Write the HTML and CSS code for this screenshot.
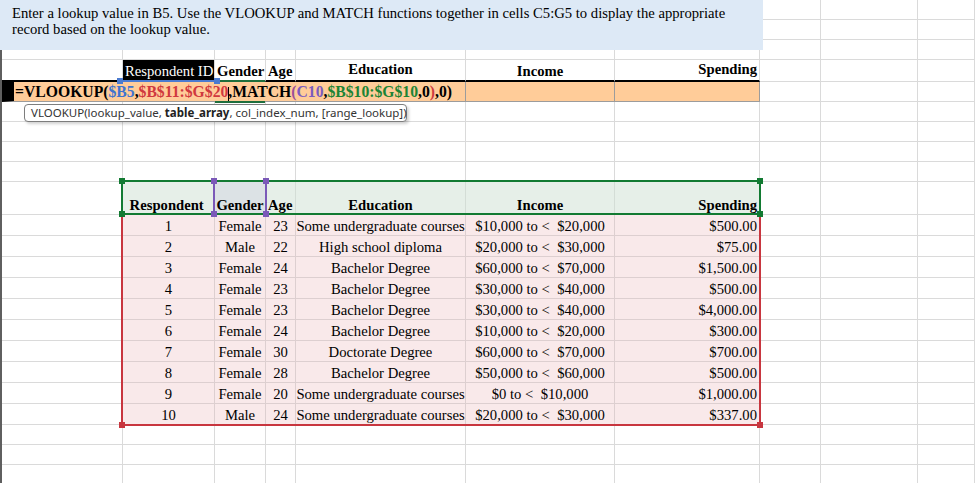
FILE: index.html
```html
<!DOCTYPE html>
<html>
<head>
<meta charset="utf-8">
<title>VLOOKUP and MATCH</title>
<link rel="stylesheet" href="styles.css">
</head>
<body>
<div class="sheet">
  <div class="edge"></div>
  <div class="grid">
    <div class="row"><div></div><div></div><div></div><div></div><div></div><div></div><div></div><div></div><div></div><div></div></div>
    <div class="row"><div></div><div></div><div></div><div></div><div></div><div></div><div></div><div></div><div></div><div></div></div>
    <div class="row"><div></div><div></div><div></div><div></div><div></div><div></div><div></div><div></div><div></div><div></div></div>
    <div class="row h22">
      <div class="thick"></div>
      <div class="thick blackcell">Respondent ID</div>
      <div class="thick b">Gender</div>
      <div class="thick b">Age</div>
      <div class="thick b c up">Education</div>
      <div class="thick b c">Income</div>
      <div class="thick b r up">Spending</div>
      <div></div><div></div><div></div>
    </div>
    <div class="row">
      <div class="formula b">=VLOOKUP(<span class="fb">$B5</span>,<span class="fr">$B$11:$G$20</span><span class="caret"></span>,MATCH<span class="fpp">(</span><span class="fp">C10</span>,<span class="fg">$B$10:$G$10</span>,0<span class="fpr">)</span>,0)</div>
      <div class="orange"></div>
      <div class="orange"></div>
      <div></div><div></div><div></div>
    </div>
    <div class="row"><div></div><div></div><div></div><div></div><div></div><div></div><div></div><div></div><div></div><div></div></div>
    <div class="row"><div></div><div></div><div></div><div></div><div></div><div></div><div></div><div></div><div></div><div></div></div>
    <div class="row"><div></div><div></div><div></div><div></div><div></div><div></div><div></div><div></div><div></div><div></div></div>
    <div class="row"><div></div><div></div><div></div><div></div><div></div><div></div><div></div><div></div><div></div><div></div></div>
    <div class="row h33">
      <div></div>
      <div class="tg b c">Respondent </div>
      <div class="tp b c">Gender</div>
      <div class="tg b">Age</div>
      <div class="tg b c">Education</div>
      <div class="tg b c">Income</div>
      <div class="tg b r">Spending</div>
      <div></div><div></div><div></div>
    </div>
    <div class="row h21"><div></div><div class="tr c">1</div><div class="tr c">Female</div><div class="tr c">23</div><div class="tr c">Some undergraduate courses</div><div class="tr c">$10,000 to &lt;  $20,000</div><div class="tr r">$500.00</div><div></div><div></div><div></div></div>
    <div class="row h21"><div></div><div class="tr c">2</div><div class="tr c">Male</div><div class="tr c">22</div><div class="tr c">High school diploma</div><div class="tr c">$20,000 to &lt;  $30,000</div><div class="tr r">$75.00</div><div></div><div></div><div></div></div>
    <div class="row h21"><div></div><div class="tr c">3</div><div class="tr c">Female</div><div class="tr c">24</div><div class="tr c">Bachelor Degree</div><div class="tr c">$60,000 to &lt;  $70,000</div><div class="tr r">$1,500.00</div><div></div><div></div><div></div></div>
    <div class="row h21"><div></div><div class="tr c">4</div><div class="tr c">Female</div><div class="tr c">23</div><div class="tr c">Bachelor Degree</div><div class="tr c">$30,000 to &lt;  $40,000</div><div class="tr r">$500.00</div><div></div><div></div><div></div></div>
    <div class="row h21"><div></div><div class="tr c">5</div><div class="tr c">Female</div><div class="tr c">23</div><div class="tr c">Bachelor Degree</div><div class="tr c">$30,000 to &lt;  $40,000</div><div class="tr r">$4,000.00</div><div></div><div></div><div></div></div>
    <div class="row h21"><div></div><div class="tr c">6</div><div class="tr c">Female</div><div class="tr c">24</div><div class="tr c">Bachelor Degree</div><div class="tr c">$10,000 to &lt;  $20,000</div><div class="tr r">$300.00</div><div></div><div></div><div></div></div>
    <div class="row h21"><div></div><div class="tr c">7</div><div class="tr c">Female</div><div class="tr c">30</div><div class="tr c">Doctorate Degree</div><div class="tr c">$60,000 to &lt;  $70,000</div><div class="tr r">$700.00</div><div></div><div></div><div></div></div>
    <div class="row h21"><div></div><div class="tr c">8</div><div class="tr c">Female</div><div class="tr c">28</div><div class="tr c">Bachelor Degree</div><div class="tr c">$50,000 to &lt;  $60,000</div><div class="tr r">$500.00</div><div></div><div></div><div></div></div>
    <div class="row h21"><div></div><div class="tr c">9</div><div class="tr c">Female</div><div class="tr c">20</div><div class="tr c">Some undergraduate courses</div><div class="tr c">$0 to &lt;  $10,000</div><div class="tr r">$1,000.00</div><div></div><div></div><div></div></div>
    <div class="row h21"><div></div><div class="tr c">10</div><div class="tr c">Male</div><div class="tr c">24</div><div class="tr c">Some undergraduate courses</div><div class="tr c">$20,000 to &lt;  $30,000</div><div class="tr r">$337.00</div><div></div><div></div><div></div></div>
    <div class="row"><div></div><div></div><div></div><div></div><div></div><div></div><div></div><div></div><div></div><div></div></div>
    <div class="row"><div></div><div></div><div></div><div></div><div></div><div></div><div></div><div></div><div></div><div></div></div>
    <div class="row"><div></div><div></div><div></div><div></div><div></div><div></div><div></div><div></div><div></div><div></div></div>
  </div>

  <div class="note">Enter a lookup value in B5. Use the VLOOKUP and MATCH functions together in cells C5:G5 to display the appropriate record based on the lookup value.</div>

  <div class="rng rng-red"><i class="hd k-bl"></i><i class="hd k-br"></i></div>
  <div class="rng rng-green"><i class="hd k-tl"></i><i class="hd k-tr"></i><i class="hd k-bl"></i><i class="hd k-br"></i></div>
  <div class="rng rng-purple"><i class="hd k-tl"></i><i class="hd k-tr"></i><i class="hd k-bl"></i><i class="hd k-br"></i></div>
  <div class="rng rng-blue"><i class="hd k-tl"></i><i class="hd k-tr"></i></div>
  <div class="rng active"></div>

  <div class="tip">VLOOKUP(lookup_value, <b>table_array</b>, col_index_num, [range_lookup])</div>
</div>
</body>
</html>
```
FILE: styles.css
```css
* { box-sizing: border-box; }
body { margin: 0; background: #fff; overflow: hidden; }

.sheet {
  position: relative;
  display: flex;
  width: 975px;
  height: 483px;
  overflow: hidden;
  font-family: "Liberation Serif", "Times New Roman", serif;
  font-size: 14.67px;
  color: #000;
}
.edge { width: 2px; flex: none; background: #5f5f5f; }
.grid { flex: 1; display: flex; flex-direction: column; }

.row {
  display: grid;
  grid-template-columns: 121px 92px 51px 30px 170px 149px 145px 61px 97px 1fr;
  height: 20px;
  flex: none;
}
.row > div {
  display: flex;
  align-items: flex-end;
  padding: 0 2px 1px;
  border-right: 1px solid #dadada;
  border-bottom: 1px solid #dadada;
  white-space: pre;
  overflow: hidden;
  line-height: 16px;
}
.h21 { height: 21px; }
.h22 { height: 22px; }
.h33 { height: 33px; }

.b { font-weight: bold; }
.c { justify-content: center; }
.r { justify-content: flex-end; }
.up { padding-bottom: 3px !important; }

.row > .thick { border-bottom: 2px solid #000; }
.row > .blackcell { background: #000; color: #fff; padding-left: 2px; }

.row > .formula {
  grid-column: span 5;
  background: #ffcc99;
  border-left: 12px solid #000;
  border-right-color: #9c9c9c;
  border-bottom-color: #9c9c9c;
  padding-left: 1px;
  padding-bottom: 1px;
  font-size: 15.7px;
  line-height: 17px;
  overflow: visible;
  position: relative;
  z-index: 1;
}
.row > .orange { background: #ffcc99; border-right-color: #9c9c9c; border-bottom-color: #9c9c9c; }

.fb { color: #3f74cf; }
.fr { color: #d0393f; }
.fp { color: #7c5cbf; }
.fpp { color: #9b4e9a; }
.fpr { color: #d0393f; }
.fg { color: #1d8435; }
.caret {
  display: inline-block;
  width: 1px;
  height: 15px;
  margin: 0 -1px -2px 0;
  background: #000;
}

.row > .tg { background: #e6efe8; border-color: #d4ddd6; }
.row > .tp { background: #dce2e5; border-color: #cfd6da; }
.row > .tr { background: #f9e9ea; border-color: #ddcfd0; }

.note {
  position: absolute;
  left: 0;
  top: 0;
  width: 763px;
  height: 50px;
  padding: 5px 12px 0;
  background: #dde9f6;
  line-height: 16px;
  z-index: 3;
}

.rng { position: absolute; z-index: 4; }
.hd { position: absolute; width: 6px; height: 6px; }
.k-tl { left: -4px; top: -4px; }
.k-tr { right: -4px; top: -4px; }
.k-bl { left: -4px; bottom: -4px; }
.k-br { right: -4px; bottom: -4px; }

.rng-red {
  left: 121px; top: 213px; width: 640px; height: 213px;
  border: 2px solid #c8363f; border-top-color: transparent;
}
.rng-red .hd { background: #c8363f; }
.rng-green {
  left: 121px; top: 180px; width: 640px; height: 35px;
  border: 2px solid #127a32;
}
.rng-green .hd { background: #127a32; }
.rng-purple {
  left: 213px; top: 180px; width: 54px; height: 35px;
  border: 2px solid #7b59b8; border-top-color: transparent; border-bottom-color: transparent;
}
.rng-purple .hd { background: #7b59b8; }
.rng-blue {
  left: 121px; top: 80px; width: 95px; height: 2px;
  border-top: 2px solid #4b7bd0;
}
.rng-blue .hd { background: #4b7bd0; }
.active {
  left: 215px; top: 80px; width: 50px; height: 23px;
  border-top: 2px solid #1e6e3c; border-bottom: 2px solid #1e6e3c;
  z-index: 2;
}

.tip {
  position: absolute;
  left: 24px;
  top: 104px;
  width: 383px;
  height: 18px;
  padding: 0 0 0 6px;
  background: #fff;
  border: 1px solid #7d7d7d;
  border-radius: 4px;
  box-shadow: 2px 2px 3px rgba(0,0,0,0.18);
  font-family: "Noto Sans", "Liberation Sans", sans-serif;
  font-size: 11.5px;
  line-height: 16px;
  color: #333;
  white-space: nowrap;
  z-index: 5;
}
.tip b { color: #222; }
```
